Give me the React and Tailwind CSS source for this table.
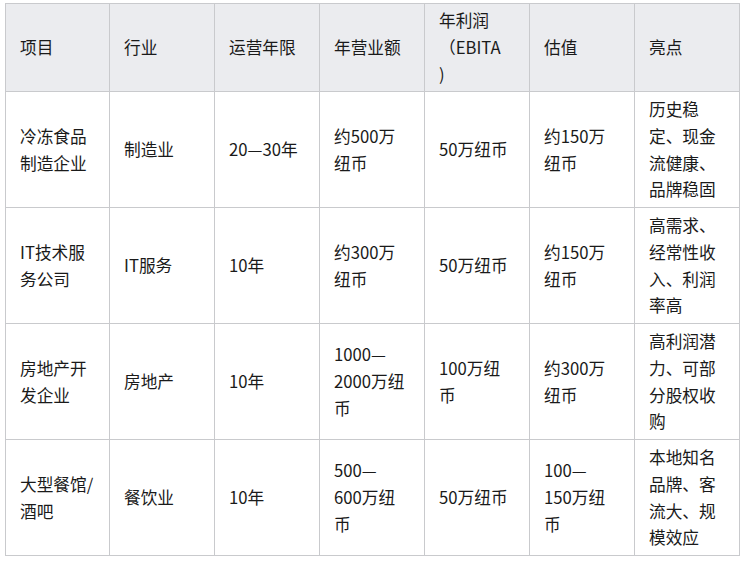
import React from "react";

const headers = [
  ["项目"],
  ["行业"],
  ["运营年限"],
  ["年营业额"],
  ["年利润", "（EBITA", ")"],
  ["估值"],
  ["亮点"],
];

const rows = [
  [
    ["冷冻食品", "制造企业"],
    ["制造业"],
    ["20—30年"],
    ["约500万", "纽币"],
    ["50万纽币"],
    ["约150万", "纽币"],
    ["历史稳", "定、现金", "流健康、", "品牌稳固"],
  ],
  [
    ["IT技术服", "务公司"],
    ["IT服务"],
    ["10年"],
    ["约300万", "纽币"],
    ["50万纽币"],
    ["约150万", "纽币"],
    ["高需求、", "经常性收", "入、利润", "率高"],
  ],
  [
    ["房地产开", "发企业"],
    ["房地产"],
    ["10年"],
    ["1000—", "2000万纽", "币"],
    ["100万纽", "币"],
    ["约300万", "纽币"],
    ["高利润潜", "力、可部", "分股权收", "购"],
  ],
  [
    ["大型餐馆/", "酒吧"],
    ["餐饮业"],
    ["10年"],
    ["500—", "600万纽", "币"],
    ["50万纽币"],
    ["100—", "150万纽", "币"],
    ["本地知名", "品牌、客", "流大、规", "模效应"],
  ],
];

function Lines({ lines }) {
  return lines.map((l, i) => (
    <div key={i} className="whitespace-nowrap">
      {l}
    </div>
  ));
}

export default function App() {
  return (
    <div
      className="min-h-[562px] bg-white pl-[5px] pt-[3px] text-[16.7px] leading-[26.67px] text-[#1a1a1a]"
      style={{ fontFamily: '"Noto Sans CJK SC", "Noto Sans", sans-serif' }}
    >
      <table className="w-[735px] table-fixed border-collapse border border-[#c9cacd]">
        <colgroup>
          <col className="w-[104px]" />
          <col className="w-[105px]" />
          <col className="w-[105px]" />
          <col className="w-[105px]" />
          <col className="w-[105px]" />
          <col className="w-[105px]" />
          <col className="w-[105px]" />
        </colgroup>
        <thead>
          <tr className="h-[88px] bg-[#ebecef]">
            {headers.map((h, i) => (
              <th
                key={i}
                className="border border-[#c9cacd] px-[14px] py-[3px] text-left align-middle font-normal"
              >
                <Lines lines={h} />
              </th>
            ))}
          </tr>
        </thead>
        <tbody>
          {rows.map((r, ri) => (
            <tr key={ri} className="h-[116px]">
              {r.map((c, ci) => (
                <td
                  key={ci}
                  className="border border-[#c9cacd] px-[14px] py-[4px] align-middle"
                >
                  <Lines lines={c} />
                </td>
              ))}
            </tr>
          ))}
        </tbody>
      </table>
    </div>
  );
}
